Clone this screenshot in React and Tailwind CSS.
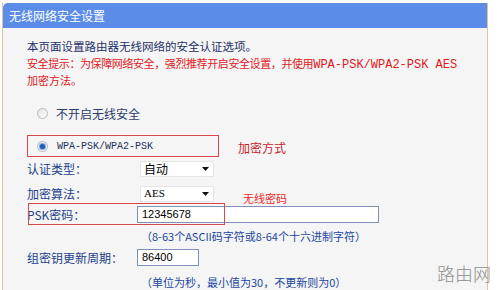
import React from "react";

const cjk = { fontFamily: '"Noto Sans CJK SC", "Liberation Sans", sans-serif' };
const mono = { fontFamily: '"Liberation Mono", "Noto Sans CJK SC", monospace' };

const Radio = ({ checked }) => (
  <span className="w-[11px] h-[11px] rounded-full border border-[#b9b9b9] bg-gradient-to-br from-[#e6e6e6] to-[#fafafa] flex items-center justify-center">
    {checked && <span className="w-[5px] h-[5px] rounded-full bg-[#1c5fb8] shadow-[0_0_0_1px_#7aa6de]" />}
  </span>
);

const Select = ({ value, ascii }) => (
  <div className="ml-[3px] w-[74px] h-[16px] bg-white border border-[#e6e6e6] flex items-center justify-between pl-[3px] pr-[4px]">
    <span className={ascii ? "text-[11px] text-black" : "text-[12px] text-black"} style={ascii ? { fontFamily: '"Liberation Serif", serif' } : cjk}>
      {value}
    </span>
    <svg width="7" height="4" viewBox="0 0 7 4">
      <path d="M0 0h7L3.5 4z" fill="#111" />
    </svg>
  </div>
);

const Label = ({ children }) => (
  <span className="w-[110px] text-[12px] text-[#22408c]" style={cjk}>
    {children}
  </span>
);

const App = () => {
  return (
    <div className="relative w-[500px] h-[290px] bg-white overflow-hidden" style={cjk}>
      <div className="ml-[2px] mt-[3px] w-[486px] h-[287px] border-x border-[#e2c39a] bg-[#f5f5f5]">
        {/* Title */}
        <div className="h-[25px] bg-[#5b8ce8] rounded-tl-[5px] flex items-center pl-[6px] text-[12px] text-white">
          无线网络安全设置
        </div>

        <div className="pl-[24px] text-[11px] leading-[17px]">
          {/* Intro */}
          <p className="mt-[10px] h-[17px] text-[#1e2f66] text-[11.5px]">本页面设置路由器无线网络的安全认证选项。</p>
          <p className="h-[17px] text-[#e0191d] tracking-[-0.4px]">
            安全提示：为保障网络安全，强烈推荐开启安全设置，并使用<span style={mono} className="text-[12px] tracking-[0px]">WPA-PSK/WPA2-PSK AES</span>
          </p>
          <p className="h-[17px] text-[#e0191d]">加密方法。</p>

          {/* Radios */}
          <div className="mt-[16px] h-[17px] flex items-center pl-[10px] gap-[8px]">
            <Radio />
            <span className="text-[12px] text-[#2c3c6c]">不开启无线安全</span>
          </div>
          <div className="mt-[16px] h-[17px] flex items-center pl-[10px] gap-[9px]">
            <Radio checked />
            <span className="text-[10px] text-[#22305c]" style={mono}>WPA-PSK/WPA2-PSK</span>
          </div>

          {/* Selects */}
          <div className="mt-[5px] h-[17px] flex items-center">
            <Label>认证类型：</Label>
            <Select value="自动" />
          </div>
          <div className="mt-[8px] h-[17px] flex items-center">
            <Label>加密算法：</Label>
            <Select value="AES" ascii />
          </div>

          {/* PSK */}
          <div className="mt-[4px] h-[17px] flex items-center">
            <Label>PSK密码：</Label>
            <div className="w-[242px] h-[17px] bg-white border border-[#7f8fba] flex items-center pl-[4px] text-[11px] text-black" style={{ fontFamily: '"Liberation Sans", sans-serif' }}>
              12345678
            </div>
          </div>
          <p className="mt-[5px] h-[17px] pl-[114px] text-[11px] text-[#2246a0]">（8-63个ASCII码字符或8-64个十六进制字符）</p>

          {/* Group key */}
          <div className="mt-[4px] h-[17px] flex items-center">
            <Label>组密钥更新周期：</Label>
            <div className="w-[62px] h-[17px] bg-white border border-[#7f8fba] flex items-center pl-[4px] text-[11px] text-black" style={{ fontFamily: '"Liberation Sans", sans-serif' }}>
              86400
            </div>
          </div>
          <p className="mt-[8px] h-[17px] pl-[114px] text-[11px] text-[#2246a0]">（单位为秒，最小值为30，不更新则为0）</p>
        </div>
      </div>

      {/* Annotations */}
      <div className="absolute left-[27px] top-[135px] w-[192px] h-[22px] border border-[#d8474c]" />
      <div className="absolute left-[28px] top-[203px] w-[197px] h-[22px] border border-[#d8474c]" />
      <span className="absolute left-[238px] top-[139px] text-[12px] leading-[17px] text-[#c8242a]">加密方式</span>
      <span className="absolute left-[243px] top-[190px] text-[11px] leading-[17px] text-[#ee2a2a]">无线密码</span>

      {/* Watermark */}
      <span className="absolute left-[437px] top-[260px] text-[18px] leading-[26px] font-light text-[#8f8f8f]">路由网</span>
    </div>
  );
};

export default App;
